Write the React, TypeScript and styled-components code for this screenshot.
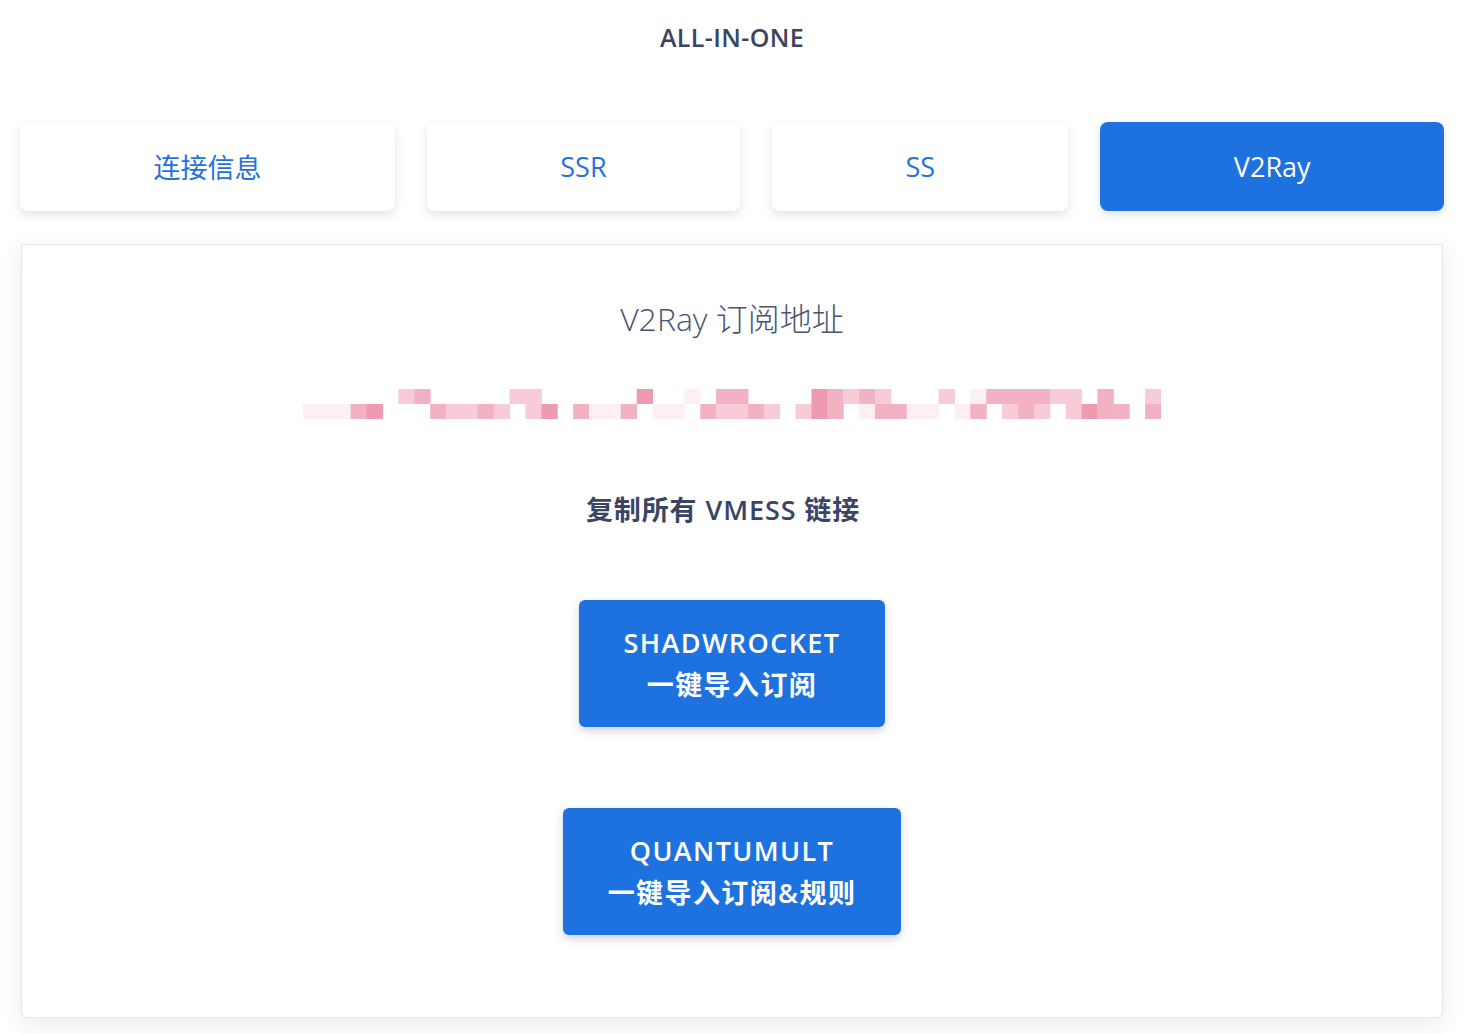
import React, { useState } from 'react';
import styled, { createGlobalStyle } from 'styled-components';

const GlobalStyle = createGlobalStyle`
  html, body {
    margin: 0;
    padding: 0;
    background: #ffffff;
  }
  body {
    font-family: 'Open Sans', 'Noto Sans CJK SC', sans-serif;
    -webkit-font-smoothing: antialiased;
  }
`;

const Page = styled.div`
  width: 1466px;
  min-height: 1034px;
  padding: 0 22px 16px 20px;
  box-sizing: border-box;
  display: flex;
  flex-direction: column;
`;

const Title = styled.h1`
  margin: 0;
  height: 74px;
  display: flex;
  align-items: center;
  justify-content: center;
  font-size: 25px;
  font-weight: 600;
  color: #3b4563;
  letter-spacing: 0.4px;
`;

const Tabs = styled.div`
  margin-top: 48px;
  display: flex;
  gap: 32px;
`;

const Tab = styled.button<{ $active?: boolean }>`
  flex: 1 1 auto;
  height: 89px;
  border: none;
  border-radius: 8px;
  background: ${(p) => (p.$active ? '#1d72e0' : '#ffffff')};
  color: ${(p) => (p.$active ? '#ffffff' : '#2672d9')};
  font-family: 'Open Sans', 'Noto Sans CJK SC', sans-serif;
  font-size: 27px;
  font-weight: 400;
  box-shadow: 0 4px 10px rgba(30, 40, 80, 0.13);
  cursor: pointer;
  padding: 0;
`;

const Card = styled.section`
  margin: 33px 1px 0 1px;
  height: 774px;
  box-sizing: border-box;
  background: #ffffff;
  border: 1px solid #e6e7ec;
  box-shadow: 0 6px 22px rgba(30, 40, 80, 0.09);
  border-radius: 0 0 6px 6px;
  display: flex;
  flex-direction: column;
  align-items: center;
  padding-top: 52px;
`;

const CardTitle = styled.h2`
  margin: 0;
  font-size: 32px;
  font-weight: 300;
  color: #4a5371;
  line-height: 44px;
`;

const Redacted = styled.svg`
  margin-top: 48px;
  display: block;
`;

const CopyLink = styled.a`
  margin-top: 71px;
  margin-right: 18px;
  font-size: 27px;
  font-weight: 600;
  letter-spacing: 0.9px;
  color: #3b4563;
  line-height: 40px;
  cursor: pointer;
`;

const ImportButton = styled.button<{ $first?: boolean }>`
  margin-top: ${(p) => (p.$first ? '70px' : '81px')};
  height: 127px;
  padding: 0 45px;
  border: none;
  border-radius: 6px;
  background: #1d72e0;
  color: #ffffff;
  font-family: 'Open Sans', 'Noto Sans CJK SC', sans-serif;
  font-size: 27px;
  font-weight: 600;
  letter-spacing: 1.4px;
  line-height: 42px;
  box-shadow: 0 4px 10px rgba(30, 40, 80, 0.2);
  display: flex;
  flex-direction: column;
  align-items: center;
  justify-content: center;
  cursor: pointer;
`;

// redacted subscription url, shown as pixel mosaic
const cols = 54;
const shades = ['#fdf0f3', '#f7cbd7', '#f2b2c4', '#ee9bb1'];
const topRow = [6, 7, 13, 14, 21, 26, 27, 32, 33, 34, 35, 36, 40, 43, 44, 45, 46, 47, 48, 50, 53];
const bottomRow = [3, 4, 8, 9, 10, 11, 12, 14, 15, 17, 18, 20, 23, 25, 26, 27, 28, 29, 31, 32, 33, 35, 36, 37, 42, 44, 45, 46, 48, 49, 50, 51, 53];

const mosaic = () => {
  const rects: React.ReactNode[] = [];
  const w = 858 / cols;
  for (let r = 0; r < 2; r++) {
    for (let c = 0; c < cols; c++) {
      const seed = (c * 37 + r * 91 + c * c * 7) % 17;
      let shade = -1;
      if (r === 0) {
        if (topRow.includes(c)) shade = (seed % 3) + 1;
        else if ([24, 42].includes(c)) shade = 0;
      } else {
        if (c < 3 || [19, 22, 38, 39, 41].includes(c)) shade = 0;
        else if (bottomRow.includes(c)) shade = seed % 4;
      }
      if (shade >= 0) {
        rects.push(
          <rect key={`${r}-${c}`} x={c * w} y={r * 15} width={w + 0.5} height={15} fill={shades[shade]} />
        );
      }
    }
  }
  return rects;
};

const tabs = ['连接信息', 'SSR', 'SS', 'V2Ray'];

const App: React.FC = () => {
  const [active, setActive] = useState(3);

  return (
    <>
      <GlobalStyle />
      <Page>
        <Title>ALL-IN-ONE</Title>
        <Tabs>
          {tabs.map((t, i) => (
            <Tab key={t} $active={active === i} onClick={() => setActive(i)}>
              {t}
            </Tab>
          ))}
        </Tabs>
        <Card>
          <CardTitle>V2Ray 订阅地址</CardTitle>
          <Redacted width="858" height="30" viewBox="0 0 858 30">
            {mosaic()}
          </Redacted>
          <CopyLink>复制所有 VMESS 链接</CopyLink>
          <ImportButton $first>
            <span>SHADWROCKET</span>
            <span>一键导入订阅</span>
          </ImportButton>
          <ImportButton>
            <span>QUANTUMULT</span>
            <span>一键导入订阅&amp;规则</span>
          </ImportButton>
        </Card>
      </Page>
    </>
  );
};

export default App;
